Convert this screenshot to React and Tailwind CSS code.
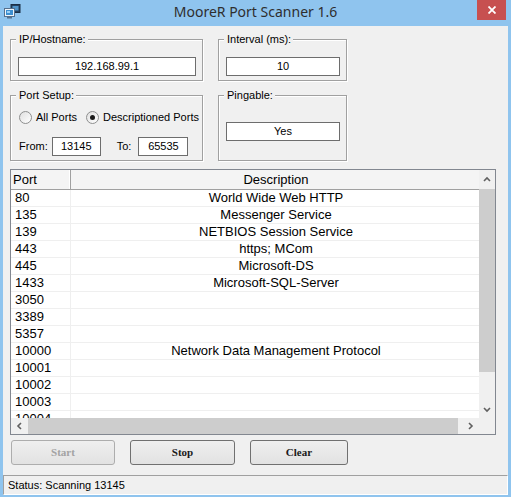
import React from 'react';

const rows = [
  ['80', 'World Wide Web HTTP'],
  ['135', 'Messenger Service'],
  ['139', 'NETBIOS Session Service'],
  ['443', 'https; MCom'],
  ['445', 'Microsoft-DS'],
  ['1433', 'Microsoft-SQL-Server'],
  ['3050', ''],
  ['3389', ''],
  ['5357', ''],
  ['10000', 'Network Data Management Protocol'],
  ['10001', ''],
  ['10002', ''],
  ['10003', ''],
  ['10004', ''],
];

function Chevron({ dir }) {
  const d = {
    up: 'M1 5 L4 2 L7 5',
    down: 'M1 2 L4 5 L7 2',
    left: 'M5 1 L2 4 L5 7',
    right: 'M2 1 L5 4 L2 7',
  }[dir];
  return (
    <svg width="8" height="8" viewBox="0 0 8 8">
      <path d={d} fill="none" stroke="#606060" strokeWidth="1.6" />
    </svg>
  );
}

function GroupBox({ label, className, children }) {
  return (
    <div className={`border border-[#a0a0a0] shadow-[inset_1px_1px_0_#fff,1px_1px_0_#fff] flex flex-col ${className}`}>
      <span className="-mt-[7px] ml-[5px] self-start px-[2px] pl-[3px] bg-[#f0f0f0] text-[11px] leading-[13px] h-[13px]">
        {label}
      </span>
      {children}
    </div>
  );
}

function TextBox({ value, className }) {
  return (
    <div className={`h-[19px] bg-white border border-[#6d6d6d] flex items-center justify-center text-[11px] ${className}`}>
      {value}
    </div>
  );
}

function Radio({ checked }) {
  return (
    <div className="w-[13px] h-[13px] rounded-full border border-[#8e8f8f] bg-gradient-to-br from-[#e0e0e0] to-white flex items-center justify-center">
      {checked && <div className="w-[5px] h-[5px] rounded-full bg-[#1a1a1a]" />}
    </div>
  );
}

function WinButton({ label, disabled, className }) {
  return (
    <button
      className={`h-[25px] rounded-[3px] border font-['Liberation_Serif',serif] font-bold text-[11px] bg-gradient-to-b from-[#efefef] to-[#e2e2e2] ${
        disabled ? 'border-[#adadad] text-[#a3a3a3]' : 'border-[#707070] text-[#1a1a1a]'
      } ${className}`}
    >
      {label}
    </button>
  );
}

export default function App() {
  return (
    <div className="w-[511px] h-[497px] bg-[#8fc4ee] flex flex-col font-['Liberation_Sans',Arial,sans-serif] text-black overflow-hidden">
      {/* Title bar */}
      <div className="h-[26px] grid grid-cols-[1fr_auto_1fr] shrink-0">
        <div className="pl-[4px] pt-[4px]">
          <svg width="17" height="15" viewBox="0 0 17 15">
            <rect x="7" y="0.5" width="9" height="8" fill="#24405f" stroke="#1a2e45" />
            <rect x="8.5" y="2" width="6" height="4.5" fill="#4f93c9" />
            <rect x="0.5" y="4.5" width="10" height="8" fill="#eef4fa" stroke="#56708d" />
            <rect x="2" y="6" width="7" height="5" fill="#3d8fd1" />
            <rect x="3" y="7" width="3" height="2" fill="#9fd0f3" />
            <rect x="3" y="12.5" width="5" height="2" fill="#56708d" />
          </svg>
        </div>
        <div className="font-['Noto_Sans',sans-serif] text-[14px] text-[#2e2e2e] leading-[26px] -mt-[1px]">
          MooreR Port Scanner 1.6
        </div>
        <div className="flex justify-end pr-[5px]">
          <div className="w-[29px] h-[20px] bg-[#c75050] flex items-center justify-center">
            <svg width="8" height="8" viewBox="0 0 8 8">
              <path d="M0.5 0.5 L7.5 7.5 M7.5 0.5 L0.5 7.5" stroke="#fff" strokeWidth="1.8" />
            </svg>
          </div>
        </div>
      </div>

      {/* Client area */}
      <div className="flex-1 mx-[3px] mb-[2px] bg-[#f0f0f0] flex flex-col">
        <div className="ml-[7px] mt-[13px] flex gap-[15px]">
          <GroupBox label="IP/Hostname:" className="w-[193px] h-[42px]">
            <TextBox value="192.168.99.1" className="ml-[7px] mt-[11px] w-[178px]" />
          </GroupBox>
          <GroupBox label="Interval (ms):" className="w-[129px] h-[42px]">
            <TextBox value="10" className="ml-[7px] mt-[11px] w-[114px]" />
          </GroupBox>
        </div>

        <div className="ml-[7px] mt-[14px] flex gap-[15px]">
          <GroupBox label="Port Setup:" className="w-[193px] h-[66px]">
            <div className="ml-[8px] mt-[8px] flex items-center text-[11px] h-[14px]">
              <Radio />
              <span className="ml-[4px]">All Ports</span>
              <div className="ml-[9px]">
                <Radio checked />
              </div>
              <span className="ml-[4px]">Descriptioned Ports</span>
            </div>
            <div className="ml-[8px] mt-[13px] flex items-center text-[11px]">
              <span>From:</span>
              <TextBox value="13145" className="ml-[4px] w-[49px]" />
              <span className="ml-[16px]">To:</span>
              <TextBox value="65535" className="ml-[7px] w-[50px]" />
            </div>
          </GroupBox>
          <GroupBox label="Pingable:" className="w-[129px] h-[66px]">
            <TextBox value="Yes" className="ml-[7px] mt-[20px] w-[114px]" />
          </GroupBox>
        </div>

        {/* List view */}
        <div className="ml-[7px] mt-[8px] w-[486px] h-[266px] border border-[#828790] bg-white flex flex-col overflow-hidden">
          <div className="flex h-[248px]">
            <div className="flex-1 flex flex-col overflow-hidden">
              <div className="h-[20px] flex shrink-0 bg-[#f4f4f4] border-b border-[#a0a0a0] text-[13px]">
                <div className="w-[60px] shrink-0 pl-[2px] flex items-center border-r border-[#a0a0a0] shadow-[inset_-1px_0_0_#fff]">
                  Port
                </div>
                <div className="w-[410px] shrink-0 flex items-center justify-center">Description</div>
              </div>
              <div className="flex-1 overflow-hidden">
                {rows.map(([port, desc]) => (
                  <div key={port} className="h-[17px] flex border-b border-[#efefef] text-[13px] leading-[16px]">
                    <div className="w-[60px] shrink-0 pl-[4px] border-r border-[#efefef]">{port}</div>
                    <div className="w-[410px] shrink-0 text-center">{desc}</div>
                  </div>
                ))}
              </div>
            </div>
            {/* vertical scrollbar */}
            <div className="w-[16px] shrink-0 bg-[#f0f0f0] flex flex-col">
              <div className="h-[19px] flex items-center justify-center">
                <Chevron dir="up" />
              </div>
              <div className="h-[183px] bg-[#cdcdcd]" />
              <div className="flex-1" />
              <div className="h-[17px] flex items-center justify-center">
                <Chevron dir="down" />
              </div>
            </div>
          </div>
          {/* horizontal scrollbar */}
          <div className="h-[16px] flex bg-[#f0f0f0]">
            <div className="w-[17px] flex items-center justify-center">
              <Chevron dir="left" />
            </div>
            <div className="w-[430px] bg-[#cdcdcd]" />
            <div className="flex-1" />
            <div className="w-[17px] flex items-center justify-center">
              <Chevron dir="right" />
            </div>
            <div className="w-[16px] bg-[#f0f0f0]" />
          </div>
        </div>

        {/* Buttons */}
        <div className="ml-[8px] mt-[5px] flex gap-[15px]">
          <WinButton label="Start" disabled className="w-[104px]" />
          <WinButton label="Stop" className="w-[105px]" />
          <WinButton label="Clear" className="w-[98px]" />
        </div>

        {/* Status bar */}
        <div className="mt-[10px] h-[20px] border-t border-l border-[#a0a0a0] border-b border-r border-b-white border-r-white flex items-center pl-[4px] text-[11px]">
          Status: Scanning 13145
        </div>
      </div>
    </div>
  );
}
